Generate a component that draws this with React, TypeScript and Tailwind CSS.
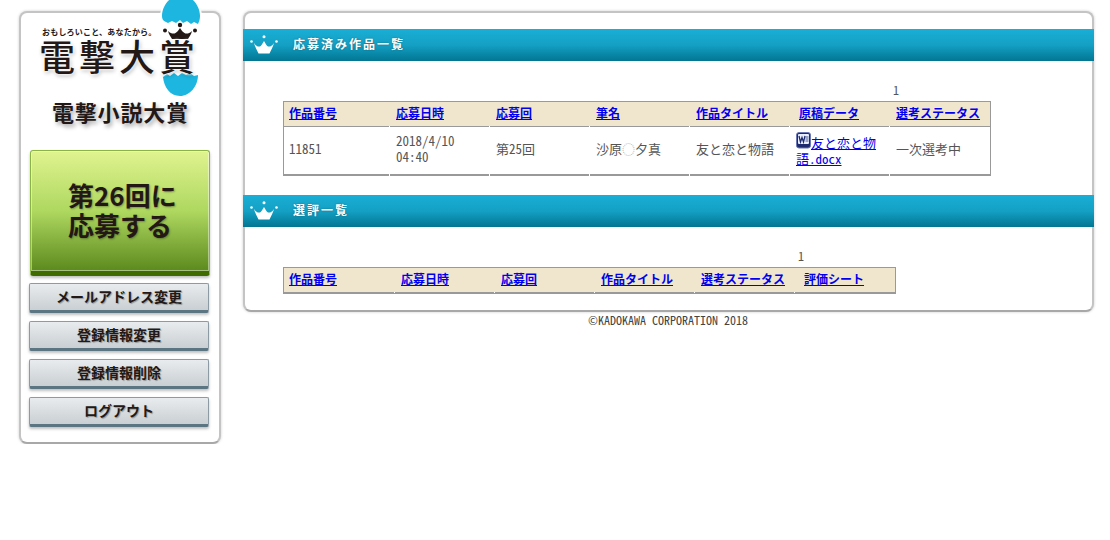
const mono = "font-['Noto_Sans_Mono_CJK_JP','DejaVu_Sans_Mono','Noto_Sans_CJK_JP',monospace]";

function Crown({ className = "" }: { className?: string }) {
  return (
    <svg viewBox="0 0 28 20" className={className} fill="#fff">
      <circle cx="1.5" cy="6.5" r="1.3" />
      <circle cx="14" cy="1.8" r="1.5" />
      <circle cx="26.5" cy="6.5" r="1.3" />
      <path d="M4 8c2 3 4 4 6 3.5 1.3-.6 2.5-3 4-5.5 1.5 2.5 2.7 4.9 4 5.5 2 .5 4-.5 6-3.5-1 4-3 7-4.500 10.500H8.500C7 15 5 12 4 8z" />
    </svg>
  );
}

function SectionBar({ title }: { title: string }) {
  return (
    <div className="flex h-[32px] items-center bg-gradient-to-b from-[#1aaed6] via-[#14a0c4] to-[#027693]">
      <Crown className="ml-[7px] h-[20px] w-[28px]" />
      <h2 className="ml-[15px] pb-[2px] text-[12px] font-bold tracking-[2px] text-white [text-shadow:0_0_2px_rgba(0,0,0,0.35)]">{title}</h2>
    </div>
  );
}

function WordIcon() {
  return (
    <svg viewBox="0 0 15 17" className="inline-block h-[17px] w-[15px] align-[-1px]">
      <rect x="0.5" y="0.500" width="14" height="15.500" rx="2.500" fill="#1d2a6e" stroke="#6b78b4" />
      <rect x="2" y="2" width="11" height="10" rx="1" fill="#e9eefc" />
      <path d="M3 4l1.500 6 1.500-4.500L7.500 10 9 4" fill="none" stroke="#1d2a6e" strokeWidth="1.300" />
      <path d="M9.500 5h3M9.500 7h3M9.500 9h3" stroke="#1d2a6e" strokeWidth="0.800" />
    </svg>
  );
}

const thCell =
  "relative border-b border-b-[#999] px-[6px] pb-[2px] text-left align-middle text-[12px] font-bold after:absolute after:-bottom-[1px] after:right-0 after:h-[1px] after:w-px after:bg-white";
const tdCell =
  "relative border-b-2 border-b-[#999] px-[6px] pb-[3px] align-middle text-[13px] leading-[16px] text-[#555] after:absolute after:-bottom-[2px] after:right-0 after:h-[2px] after:w-px after:bg-white";

function HeadLink({ children }: { children: string }) {
  return <a href="#" className="text-[#0000ee] underline">{children}</a>;
}

function SideButton({ label, mt }: { label: string; mt: string }) {
  return (
    <a
      href="#"
      className={`${mt} ml-[8px] flex h-[30px] w-[180px] items-center justify-center rounded-[2px] border border-[#8c9aa3] border-b-[3px] border-b-[#5c7583] bg-gradient-to-b from-[#e9ecee] to-[#c9cfd3] pb-[2px] text-[14px] font-bold text-[#231815] shadow-[0_2px_3px_rgba(0,0,0,0.25)] font-['Noto_Sans_CJK_JP',sans-serif] [text-shadow:1px_1px_1px_rgba(0,0,0,0.3)]`}
    >
      {label}
    </a>
  );
}

function Logo() {
  return (
    <div className="relative h-[118px] font-['Noto_Sans_CJK_JP',sans-serif] text-[#231815]">
      {/* egg and crown sit over the panel's top edge */}
      <svg viewBox="0 0 44 100" className="absolute left-[139px] top-[-13px] h-[100px] w-[44px]">
        <path d="M0 17C0 4 10-6 21-6s21 10 21 23v55c0 16-9 27-21 27S0 88 0 72z" fill="#fff" />
        <path d="M2 16C2 5 11-5 21-5s19 10 19 21c0 3-1 6-2 8l-4-2-3 2-4-3-4 2-3-3-4 3-4-2-4 2-2-1C3 21 2 19 2 16z" fill="#1cb6e0" />
        <path d="M3 77l4-3 3 2 4-3 4 3 4-3 4 2 4-2 4 3 4-1c0 11-8 21-18 21S4 87 3 77z" fill="#1cb6e0" />
        <g fill="#231815">
          <circle cx="5" cy="30.500" r="2" />
          <circle cx="20" cy="25" r="2.200" />
          <circle cx="35" cy="30.500" r="2" />
          <path d="M8 31c3 3 6 3 7.500 2 2-1 3-3 4.500-5 1.500 2 2.500 4 4.500 5 1.500 1 4.500 1 7.500-2-1 4-3 6-4 8H12c-1-2-3-4-4-8z" />
        </g>
      </svg>
      <p className="relative pl-[21px] pt-[13px] text-[8px] font-bold leading-[12px] tracking-[0.2px] whitespace-nowrap [text-shadow:0_0_2px_#fff]">
        おもしろいこと、あなたから。
      </p>
      <p className="relative ml-[18px] -mt-[3px] whitespace-nowrap text-[36px] font-medium leading-[40px] tracking-[4px] [text-shadow:0_0_3px_#fff,0_0_3px_#fff,1px_2px_4px_rgba(0,0,0,0.3)]">
        電撃大賞
      </p>
      <p className="relative ml-[31px] mt-[22px] whitespace-nowrap text-[22px] font-bold leading-[28px] tracking-[0.8px] [text-shadow:2px_3px_4px_rgba(0,0,0,0.35)]">
        電撃小説大賞
      </p>
    </div>
  );
}

function Sidebar() {
  return (
    <aside className="h-[433px] w-[202px] shrink-0 rounded-[8px] border-2 border-[#c4c4c4] border-b-[#a8a8a8] bg-white shadow-[0_0_3px_rgba(0,0,0,0.2)]">
      <Logo />
      <a
        href="#"
        className="ml-[9px] mt-[19px] flex h-[126px] w-[180px] flex-col justify-center rounded-[3px] border border-[#8ab63f] border-b-[5px] border-b-[#3f6b00] bg-gradient-to-b from-[#e0f38f] via-[#aed85f] to-[#5d8a1c] pb-[3px] pl-[37px] text-[26px] font-bold leading-[30px] text-[#231815] shadow-[inset_0_0_0_1px_rgba(255,255,255,0.45),0_2px_3px_rgba(0,0,0,0.25)] font-['Noto_Sans_CJK_JP',sans-serif] [text-shadow:1px_1px_2px_rgba(0,0,0,0.3)]"
      >
        <span>第26回に</span>
        <span>応募する</span>
      </a>
      <SideButton label="メールアドレス変更" mt="mt-[7px]" />
      <SideButton label="登録情報変更" mt="mt-[8px]" />
      <SideButton label="登録情報削除" mt="mt-[8px]" />
      <SideButton label="ログアウト" mt="mt-[8px]" />
    </aside>
  );
}

function EntriesTable() {
  const heads = ["作品番号", "応募日時", "応募回", "筆名", "作品タイトル", "原稿データ", "選考ステータス"];
  const widths = [107, 100, 100, 100, 100, 100, 101];
  return (
    <table className="ml-[40px] mt-[22px] w-[708px] table-fixed border-separate border-spacing-0">
      <colgroup>
        {widths.map((w, i) => (
          <col key={i} style={{ width: w }} />
        ))}
      </colgroup>
      <tbody>
        <tr className="h-[18px]">
          <td colSpan={6} />
          <td className="px-[3px] pb-[4px] align-middle text-[12px] leading-[14px] text-[#555]">1</td>
        </tr>
        <tr className="h-[26px] bg-[#f0e6cd]">
          {heads.map((h, i) => (
            <th
              key={h}
              className={`${thCell} border-t border-t-[#999] ${i === 0 ? "border-l border-l-[#999] !pl-[5px]" : ""} ${i === 5 ? "!pl-[9px]" : ""} ${i === 6 ? "border-r border-r-[#999] after:hidden" : ""}`}
            >
              <HeadLink>{h}</HeadLink>
            </th>
          ))}
        </tr>
        <tr className="h-[49px]">
          <td className={`${tdCell} border-l border-l-[#999] !pl-[5px]`}>11851</td>
          <td className={tdCell}>2018/4/10<br />04:40</td>
          <td className={tdCell}>第25回</td>
          <td className={tdCell}>沙原<span className="text-[#bbb]">◌</span>夕真</td>
          <td className={tdCell}>友と恋と物語</td>
          <td className={tdCell}>
            <WordIcon />
            <a href="#" className="text-[#0000ee] underline">友と恋と物語.docx</a>
          </td>
          <td className={`${tdCell} border-r border-r-[#999] after:hidden`}>一次選考中</td>
        </tr>
      </tbody>
    </table>
  );
}

function ReviewTable() {
  const heads = ["作品番号", "応募日時", "応募回", "作品タイトル", "選考ステータス", "評価シート"];
  const widths = [112, 100, 100, 100, 100, 101];
  return (
    <table className="ml-[40px] mt-[21px] w-[613px] table-fixed border-separate border-spacing-0">
      <colgroup>
        {widths.map((w, i) => (
          <col key={i} style={{ width: w }} />
        ))}
      </colgroup>
      <tbody>
        <tr className="h-[19px]">
          <td colSpan={5} />
          <td className="px-[3px] pb-[4px] align-middle text-[12px] leading-[14px] text-[#555]">1</td>
        </tr>
        <tr className="h-[27px] bg-[#f0e6cd]">
          {heads.map((h, i) => (
            <th
              key={h}
              className={`${thCell} border-t border-t-[#999] !border-b-2 ${i === 0 ? "border-l border-l-[#999] !pl-[5px]" : ""} ${i === 5 ? "border-r border-r-[#999] !pl-[9px] after:hidden" : ""}`}
            >
              <HeadLink>{h}</HeadLink>
            </th>
          ))}
        </tr>
      </tbody>
    </table>
  );
}

export default function App() {
  return (
    <div className={`${mono} flex gap-[22px] bg-white pl-[19px] pt-[11px]`}>
      <Sidebar />
      <main className="w-[851px] shrink-0">
        <div className="h-[301px] rounded-[8px] border-2 border-[#c4c4c4] border-b-[#a8a8a8] bg-white shadow-[0_0_3px_rgba(0,0,0,0.2)]">
          <div className="-mx-[2px] mt-[16px]">
            <SectionBar title="応募済み作品一覧" />
            <EntriesTable />
          </div>
          <div className="-mx-[2px] mt-[19px]">
            <SectionBar title="選評一覧" />
            <ReviewTable />
          </div>
        </div>
        <p className="pr-[1px] text-center text-[12px] leading-[16px] text-[#444]">©KADOKAWA CORPORATION 2018</p>
      </main>
    </div>
  );
}
